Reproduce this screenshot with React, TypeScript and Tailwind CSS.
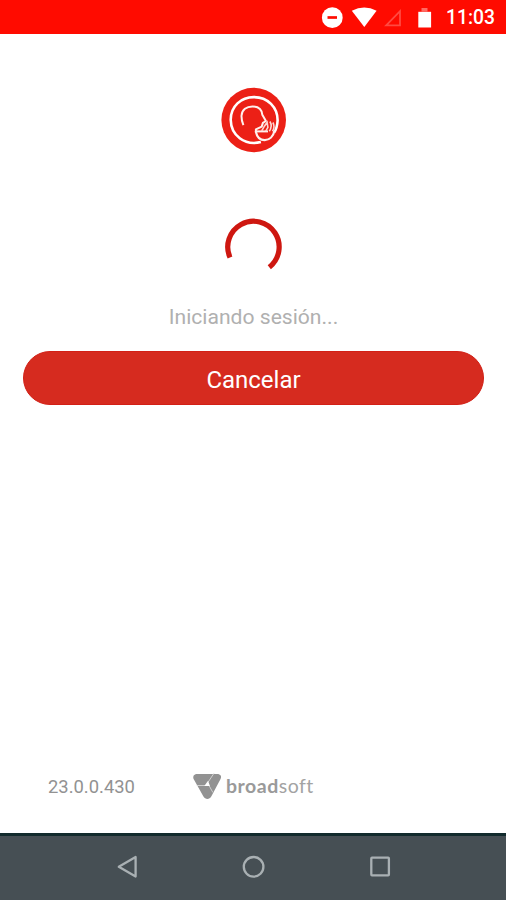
function StatusBar() {
  return (
    <header className="flex h-[34px] shrink-0 items-center bg-[#ff0b00] pl-[321px] text-white">
      <svg className="h-[34px] w-[125px] shrink-0" viewBox="321 0 125 34" fill="none">
        <circle cx="332.3" cy="17.7" r="10.4" fill="white" />
        <path d="M327.5 17.5h9.5" stroke="#ff0b00" strokeWidth="2.7" />
        <path d="M351.8 10.8Q364.3 4.3 376.6 10.8L364.3 27Z" fill="white" />
        <path d="M386.2 25.3H400V11.2Z" stroke="#ff4a41" strokeWidth="1.8" />
        <path d="M421.5 8h6v3.5h-6z" fill="#ff6a62" />
        <path d="M418.3 11.8h12.8v15.7h-12.8z" fill="white" />
      </svg>
      <span className="mt-[2px] text-[19.3px] leading-none font-medium whitespace-nowrap">11:03</span>
    </header>
  );
}

function AppLogo() {
  return (
    <svg className="mt-[53px] ml-px size-[66px] shrink-0" viewBox="220.5 87 66 66" fill="none">
      <circle cx="253.2" cy="120" r="32.3" fill="#ec2016" />
      <path
        d="M260.4 142.1C244 146 230.5 135.5 230.2 119.8C230.2 106.3 240.5 97 253.5 97.1C267.3 97.1 277.2 107.5 277.1 120.5C276.8 125.5 275.8 129.5 273.6 132.6"
        stroke="white"
        strokeWidth="2.6"
      />
      <path
        d="M242.9 125.2C241.5 122 240.9 118.8 241 115.7C241.4 109.8 246 106.4 252 106.4C258.2 106.4 261.4 109.4 261.8 114.8L265.4 121L262.4 122.9L261.2 126.6L255.4 129.3V132"
        stroke="#fff0ed"
        strokeWidth="2"
        strokeLinejoin="round"
      />
      <path
        d="M255.2 131.2C256.5 137.4 259.8 140.2 264.2 140.2C269 140.1 272.8 136.4 274 130.8"
        stroke="#fff0ed"
        strokeWidth="2.2"
      />
      <path d="M255.4 131.4H267.5" stroke="#fff0ed" strokeWidth="2" />
      <path
        d="M261.2 130.8L263.9 126.2L266.6 122.4L267.4 127.4L265.2 131.2M269.4 121.5Q272.3 126 268.8 131.3M272.4 122.5Q274.8 127 272 131.2"
        stroke="#ffd6d1"
        strokeWidth="1.6"
      />
    </svg>
  );
}

function Spinner() {
  return (
    <svg className="mt-[64px] size-[60px] shrink-0" viewBox="223.5 217 60 60" fill="none">
      <path d="M230.5 257.5A25.7 25.7 0 1 1 269.8 267.2" stroke="#ce1710" strokeWidth="5.2" />
    </svg>
  );
}

function Footer() {
  return (
    <footer className="mt-auto mb-[29px] flex h-[34px] w-full items-center pl-12 text-[#929292]">
      <span className="w-[144px] text-[18.4px] leading-none">23.0.0.430</span>
      <svg className="h-[30px] w-[32px] shrink-0" viewBox="192 771 32 30" fill="none">
        <path
          d="M197.2 772.9H217C220.7 772.9 222 775.3 220.4 778.2L211.4 795.3C209.4 799 205.4 799 203.3 795.3L193.9 778.5C192.3 775.3 193.9 772.9 197.2 772.9Z"
          fill="#929292"
        />
        <path d="M208.2 781L213.8 772.5M206 784.5H196.8M208.8 784.1L212.9 791.5" stroke="#cfcfcf" strokeWidth="1" />
        <path d="M208.1 779.8L209.9 785.1H204.3Z" fill="white" />
      </svg>
      <span className="mb-[2px] ml-[2px] font-['Lato','Open_Sans',sans-serif] text-[19.5px] leading-none tracking-[0.5px] whitespace-nowrap">
        <span className="font-bold text-[#9a9a9a]">broad</span>
        <span className="text-[#a3a3a3]">soft</span>
      </span>
    </footer>
  );
}

function NavigationBar() {
  return (
    <nav className="flex h-[67px] shrink-0 items-center justify-center border-t-[3px] border-[#122b2d] bg-[#464f54]">
      <svg className="h-[64px] w-full" viewBox="0 836 506 64" fill="none" stroke="#a9b0b3" strokeWidth="2.3">
        <path d="M118.8 866.8L135.6 857V876.6Z" strokeLinejoin="round" />
        <circle cx="253.6" cy="866.8" r="9.8" />
        <rect x="371.3" y="857.7" width="17.6" height="17.6" rx="0.7" />
      </svg>
    </nav>
  );
}

export default function App() {
  return (
    <div className="flex h-[900px] w-[506px] flex-col overflow-hidden bg-white font-['Roboto',sans-serif]">
      <StatusBar />
      <main className="flex min-h-0 flex-1 flex-col items-center">
        <AppLogo />
        <Spinner />
        <p className="mt-[28px] ml-px h-6 text-[21.1px] leading-6 text-[#b0b0b0]">Iniciando sesión...</p>
        <button className="mt-[22px] ml-px h-[54px] w-[461px] shrink-0 rounded-full border border-[#d22016] bg-[#d62b1f] pt-[3px] text-[24px] leading-none text-white">
          Cancelar
        </button>
        <Footer />
      </main>
      <NavigationBar />
    </div>
  );
}
